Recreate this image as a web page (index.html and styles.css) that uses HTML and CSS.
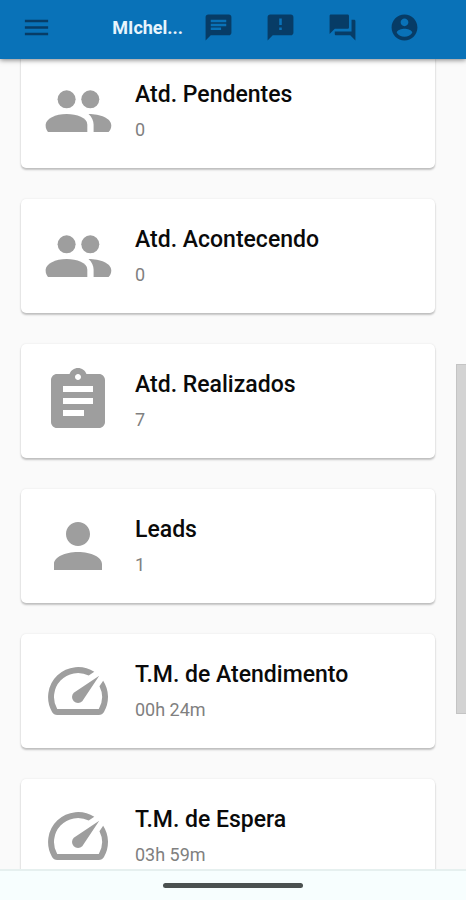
FILE: index.html
```html
<!DOCTYPE html>
<html lang="pt-BR">
<head>
  <meta charset="utf-8">
  <meta name="viewport" content="width=device-width, initial-scale=1">
  <title>Atendimentos</title>
  <link rel="stylesheet" href="styles.css">
</head>
<body>
  <header class="toolbar">
    <button class="icon-button" type="button" aria-label="Menu">
      <svg viewBox="0 0 24 24"><path d="M3 6h18v2H3V6m0 5h18v2H3v-2m0 5h18v2H3v-2z"/></svg>
    </button>
    <span class="user-name">MIchel...</span>
    <nav class="actions">
      <button class="icon-button" type="button" aria-label="Mensagens">
        <svg viewBox="0 0 24 24"><path d="M20 2H4c-1.1 0-2 .9-2 2v18l4-4h14c1.1 0 2-.9 2-2V4c0-1.100-.9-2-2-2zM6 9h12v2H6V9zm8 5H6v-2h8v2zm4-6H6V6h12v2z"/></svg>
      </button>
      <button class="icon-button" type="button" aria-label="Avisos">
        <svg viewBox="0 0 24 24"><path d="M20 2H4c-1.1 0-2 .9-2 2v18l4-4h14c1.1 0 2-.9 2-2V4c0-1.100-.9-2-2-2zm-7 12h-2v-2h2v2zm0-4h-2V5h2v5z"/></svg>
      </button>
      <button class="icon-button" type="button" aria-label="Conversas">
        <svg viewBox="0 0 24 24"><path d="M21 6h-2v9H6v2c0 .55.45 1 1 1h11l4 4V7c0-.55-.45-1-1-1zm-4 6V3c0-.55-.45-1-1-1H3c-.55 0-1 .45-1 1v14l4-4h10c.55 0 1-.45 1-1z"/></svg>
      </button>
      <button class="icon-button" type="button" aria-label="Conta">
        <svg viewBox="0 0 24 24"><path d="M12 2C6.480 2 2 6.480 2 12s4.480 10 10 10 10-4.480 10-10S17.520 2 12 2zm0 3c1.660 0 3 1.340 3 3s-1.340 3-3 3-3-1.340-3-3 1.340-3 3-3zm0 14.200c-2.500 0-4.710-1.280-6-3.220.03-1.990 4-3.080 6-3.080 1.990 0 5.970 1.090 6 3.080-1.290 1.940-3.500 3.220-6 3.220z"/></svg>
      </button>
    </nav>
  </header>

  <main class="content">
    <div class="card-list">
      <section class="card">
        <svg class="card-icon" viewBox="0 0 24 24"><use href="#people"/></svg>
        <div>
          <h2 class="card-title">Atd. Pendentes</h2>
          <p class="card-value">0</p>
        </div>
      </section>

      <section class="card">
        <svg class="card-icon" viewBox="0 0 24 24"><use href="#people"/></svg>
        <div>
          <h2 class="card-title">Atd. Acontecendo</h2>
          <p class="card-value">0</p>
        </div>
      </section>

      <section class="card">
        <svg class="card-icon" viewBox="0 0 24 24"><path d="M19 3h-4.180C14.400 1.840 13.300 1 12 1s-2.400.84-2.820 2H5c-1.100 0-2 .9-2 2v14c0 1.100.9 2 2 2h14c1.100 0 2-.9 2-2V5c0-1.100-.9-2-2-2zm-7 0c.55 0 1 .45 1 1s-.45 1-1 1-1-.45-1-1 .45-1 1-1zm2 14H7v-2h7v2zm3-4H7v-2h10v2zm0-4H7V7h10v2z"/></svg>
        <div>
          <h2 class="card-title">Atd. Realizados</h2>
          <p class="card-value">7</p>
        </div>
      </section>

      <section class="card">
        <svg class="card-icon" viewBox="0 0 24 24"><path d="M12 12c2.210 0 4-1.790 4-4s-1.790-4-4-4-4 1.790-4 4 1.790 4 4 4zm0 2c-4.420 0-8 1.790-8 4v2h16v-2c0-2.210-3.580-4-8-4z"/></svg>
        <div>
          <h2 class="card-title">Leads</h2>
          <p class="card-value">1</p>
        </div>
      </section>

      <section class="card">
        <svg class="card-icon" viewBox="0 0 24 24"><use href="#speed"/></svg>
        <div>
          <h2 class="card-title">T.M. de Atendimento</h2>
          <p class="card-value">00h 24m</p>
        </div>
      </section>

      <section class="card">
        <svg class="card-icon" viewBox="0 0 24 24"><use href="#speed"/></svg>
        <div>
          <h2 class="card-title">T.M. de Espera</h2>
          <p class="card-value">03h 59m</p>
        </div>
      </section>
    </div>
    <div class="scroll-thumb"></div>
  </main>

  <footer class="system-bar">
    <div class="home-handle"></div>
  </footer>

  <!-- Icons used by more than one card -->
  <svg class="hidden">
    <symbol id="people" viewBox="0 0 24 24">
      <circle cx="8.200" cy="8.100" r="3"/>
      <circle cx="16.100" cy="8.100" r="3"/>
      <path d="M8.200 13C4.500 13 1.200 14.600 1.200 16.700c0 1 .3 1.800.8 2.300h13.100v-2.500c0-2.300-3.500-3.500-6.900-3.500z"/>
      <path d="M15.500 13c1.100 1 1.700 2.200 1.700 3.500V19h5c.5-.5.9-1.300.9-2.200 0-2.400-3.700-3.800-7.600-3.800z"/>
    </symbol>
    <symbol id="speed" viewBox="0 0 24 24">
      <path d="M20.380 8.570l-1.230 1.850a8 8 0 0 1-.22 7.580H5.070A8 8 0 0 1 15.580 6.850l1.850-1.230A10 10 0 0 0 3.350 19a2 2 0 0 0 1.720 1h13.850a2 2 0 0 0 1.740-1 10 10 0 0 0-.27-10.440zm-9.790 6.840a2 2 0 0 0 2.830 0l5.660-8.490-8.490 5.660a2 2 0 0 0 0 2.830z"/>
    </symbol>
  </svg>
</body>
</html>
```
FILE: styles.css
```css
* {
  box-sizing: border-box;
}

body {
  display: flex;
  flex-direction: column;
  height: 100vh;
  margin: 0;
  overflow: hidden;
  background-color: #fafafa;
  color: #0a0a0a;
  font-family: Roboto, sans-serif;
}

.hidden {
  display: none;
}

/* Top toolbar */
.toolbar {
  display: flex;
  flex-shrink: 0;
  align-items: center;
  height: 59px;
  padding: 0 46px 4px 21px;
  background-color: #0972b8;
  box-shadow: 0 1px 5px rgba(0, 0, 0, 0.5);
  z-index: 1;
}

.icon-button {
  display: flex;
  padding: 0;
  border: 0;
  background: none;
  cursor: pointer;
}

.icon-button svg {
  width: 31px;
  height: 31px;
  fill: #073c66;
}

.user-name {
  margin-left: auto;
  color: #e8f4fc;
  font-size: 18px;
  font-weight: 700;
}

.actions {
  display: flex;
  gap: 31px;
  margin-left: 20px;
}

/* Cards */
.content {
  position: relative;
  flex: 1;
  min-height: 0;
  overflow: hidden;
}

/* The list is scrolled, its first card starts under the toolbar */
.card-list {
  display: flex;
  flex-direction: column;
  gap: 31px;
  margin: -5px 31px 0 21px;
}

.card {
  display: flex;
  align-items: center;
  gap: 21px;
  padding: 21px;
  border-radius: 5px;
  background-color: #fff;
  box-shadow: 0 2px 2px rgba(0, 0, 0, 0.22), 0 0 2px rgba(0, 0, 0, 0.1);
}

.card-icon {
  flex-shrink: 0;
  width: 72px;
  height: 72px;
  fill: #9e9e9e;
}

.card-title {
  margin: 0;
  font-size: 23px;
  font-weight: 500;
  line-height: 38px;
}

.card-value {
  margin: 0;
  color: #808080;
  font-size: 18px;
  line-height: 32px;
}

.scroll-thumb {
  position: absolute;
  top: 305px;
  right: 0;
  width: 10px;
  height: 350px;
  border: 1px solid #c4c4c4;
  border-right: 0;
  background-color: #d3d3d3;
}

/* Bottom system bar */
.system-bar {
  display: flex;
  flex-shrink: 0;
  align-items: center;
  justify-content: center;
  height: 31px;
  border-top: 2px solid #e6f0ef;
  background-color: #f7fefe;
  z-index: 1;
}

.home-handle {
  width: 30%;
  height: 5px;
  border-radius: 3px;
  background-color: #4b5150;
}
```
